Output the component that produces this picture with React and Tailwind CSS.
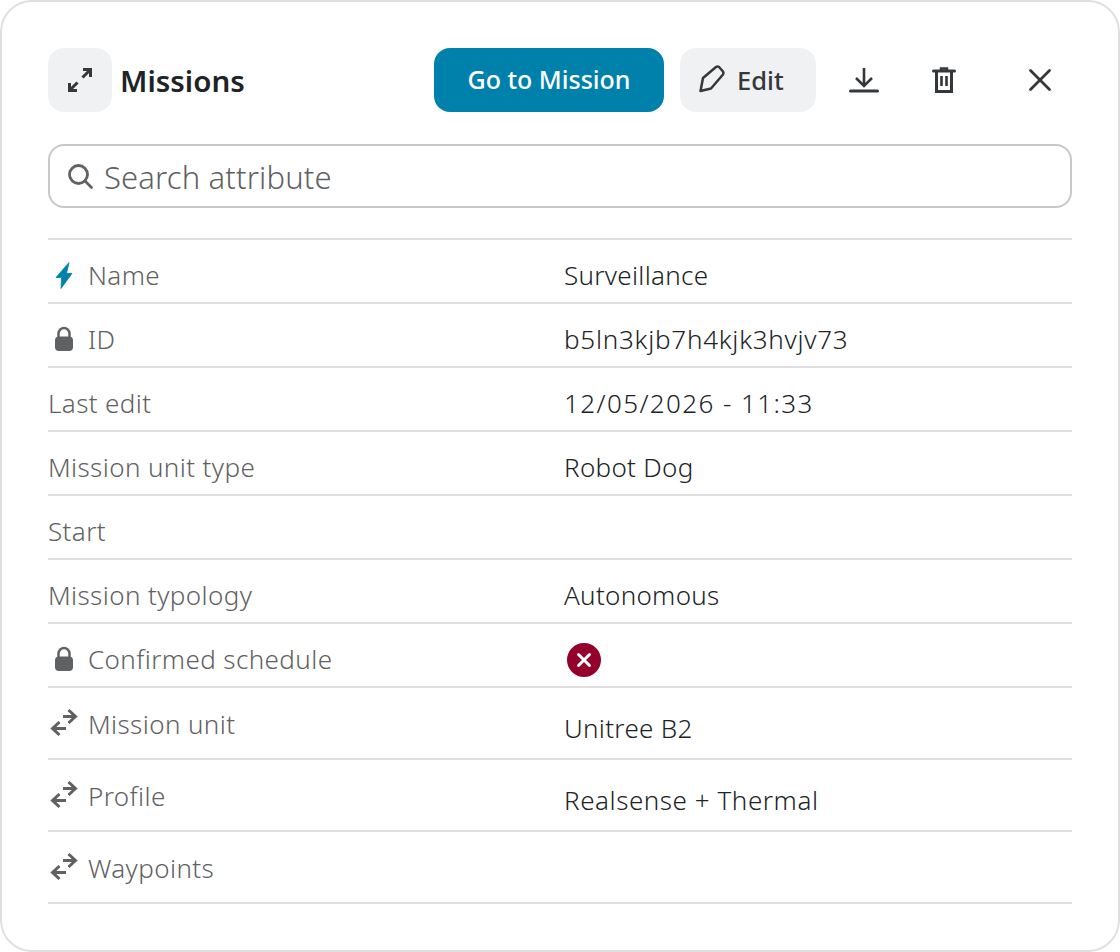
import React from "react";

const Lock = () => (
  <svg width="32" height="32" viewBox="0 0 32 32" className="shrink-0">
    <path d="M10.5 14 V9.5 a5.5 5.5 0 0 1 11 0 V14" fill="none" stroke="#5f6163" strokeWidth="2.5" />
    <rect x="7" y="12.5" width="18" height="14.5" rx="4" fill="#5f6163" />
  </svg>
);
const Bolt = () => (
  <svg width="32" height="32" viewBox="0 0 32 32" className="shrink-0">
    <path d="M21 2.5 L8 17.5 H13.5 L13 28.5 L24 13.5 H18.5 Z" fill="#0081ab" strokeLinejoin="round" stroke="#0081ab" strokeWidth="0.8" />
  </svg>
);
const Swap = () => (
  <svg width="32" height="32" viewBox="0 0 32 32" fill="none" stroke="#5f6163" strokeWidth="3" className="shrink-0 mb-[2px]">
    <path d="M15 9.5 H27 M20.5 3 L27.5 9.5 L20.5 16" />
    <path d="M18 21.5 H5 M11.5 15 L4.5 21.5 L11.5 28" />
  </svg>
);

const rows = [
  { l: "Name", v: "Surveillance", icon: "bolt" },
  { l: "ID", v: "b5ln3kjb7h4kjk3hvjv73", icon: "lock", t: "tracking-[0.75px]" },
  { l: "Last edit", v: "12/05/2026 - 11:33", t: "tracking-[1.4px]" },
  { l: "Mission unit type", v: "Robot Dog" },
  { l: "Start", v: "" },
  { l: "Mission typology", v: "Autonomous" },
  { l: "Confirmed schedule", x: true, icon: "lock" },
  { l: "Mission unit", v: "Unitree B2", icon: "swap", tall: true },
  { l: "Profile", v: "Realsense + Thermal", icon: "swap", tall: true, t: "tracking-[0.55px]" },
  { l: "Waypoints", v: "", icon: "swap", tall: true },
];

function Row({ r }) {
  return (
    <div className={`flex border-b-2 border-[#e0e0e0] ${r.tall ? "h-[72px]" : "h-16"}`}>
      <div className={`w-[516px] shrink-0 flex items-center text-[#5f6163] font-light tracking-[0.4px] ${r.tall ? "pt-2 pb-[6px]" : "pt-[9px]"}`}>
        {r.icon === "bolt" && <span className="w-10 flex"><Bolt /></span>}
        {r.icon === "lock" && <span className="w-10 flex"><Lock /></span>}
        {r.icon === "swap" && <span className="w-10 flex"><Swap /></span>}
        <span>{r.l}</span>
      </div>
      <div className={`flex-1 flex items-center text-[#202326] font-light ${r.t || "tracking-[0.3px]"} ${r.tall ? "pt-[10px]" : "pt-[9px]"}`}>
        {r.x ? (
          <svg width="34" height="34" viewBox="0 0 34 34" className="ml-[3px]">
            <circle cx="17" cy="17" r="17" fill="#94002b" />
            <path d="M11.5 11.5 L22.5 22.5 M22.5 11.5 L11.5 22.5" stroke="#fff" strokeWidth="3" strokeLinecap="round" />
          </svg>
        ) : (
          <span>{r.v}</span>
        )}
      </div>
    </div>
  );
}

export default function App() {
  return (
    <div className="w-[1120px] h-[952px] bg-white">
      <div className="w-full h-full box-border rounded-[32px] border-2 border-[#e0e0e0] bg-white px-[46px] pt-[46px] text-[26px] font-['Noto_Sans',sans-serif]">
        <div className="flex items-center h-16">
          <div className="w-16 h-16 rounded-2xl bg-[#f0f1f3] flex items-center justify-center">
            <svg width="32" height="32" viewBox="0 0 32 32" fill="none" stroke="#35383b" strokeWidth="3">
              <path d="M18.5 13.5 L26 6 M19 5.5 H26.5 V13" />
              <path d="M13.5 18.5 L6 26 M13 26.5 H5.5 V19" />
            </svg>
          </div>
          <div className="ml-2 pt-[2px] text-[29.5px] font-semibold text-[#202326]">Missions</div>
          <div className="flex-1" />
          <button className="w-[230px] h-16 rounded-2xl bg-[#0081ab] text-white font-medium text-[25px]">Go to Mission</button>
          <button className="ml-4 w-[136px] h-16 rounded-2xl bg-[#f0f1f3] text-[#35383b] font-medium text-[25.5px] flex items-center pl-4 gap-[9px]">
            <svg width="32" height="32" viewBox="0 0 32 32" fill="none" stroke="#35383b" strokeWidth="2.5" strokeLinejoin="round" className="shrink-0">
              <path d="M4.5 27 L7 14 L20 3 Q21.5 2 23 3 L27 7.5 Q28 9 27 10.5 L15 24.5 Z" />
            </svg>
            Edit
          </button>
          <div className="w-12 h-12 ml-6 flex items-center justify-center">
            <svg width="30" height="30" viewBox="0 0 30 30" fill="none" stroke="#35383b">
              <path d="M15 3 V20 M7 13 L15 21 L23 13" strokeWidth="2.6" />
              <path d="M1.5 26 H28.5" strokeWidth="3" strokeLinecap="round" />
            </svg>
          </div>
          <div className="w-12 h-12 ml-8 flex items-center justify-center">
            <svg width="26" height="28" viewBox="0 0 26 28" fill="none" stroke="#35383b" className="mt-[1px]">
              <path d="M2.5 4 H23.5" strokeWidth="3" strokeLinecap="round" />
              <path d="M10 3 V1.5 H16 V3" strokeWidth="2.4" />
              <path d="M5.5 4 V24.5 H20.5 V4" strokeWidth="3" />
              <path d="M10.5 9 V19 M15.5 9 V19" strokeWidth="2.6" />
            </svg>
          </div>
          <div className="w-12 h-12 ml-12 flex items-center justify-center">
            <svg width="26" height="26" viewBox="0 0 26 26" fill="none" stroke="#35383b" strokeWidth="2.8" strokeLinecap="round">
              <path d="M3.5 3.5 L22.5 22.5 M22.5 3.5 L3.5 22.5" />
            </svg>
          </div>
          <div className="w-2" />
        </div>
        <div className="mt-8 h-16 rounded-2xl border-2 border-[#c8c8c8] flex items-center pl-[16px] text-[#5f6163] font-light">
          <svg width="28" height="28" viewBox="0 0 28 28" fill="none" stroke="#5f6163" strokeWidth="2.8" className="shrink-0">
            <circle cx="12.5" cy="12.5" r="9" />
            <path d="M19 19 L25.5 25.5" strokeLinecap="round" />
          </svg>
          <span className="ml-[10px] pt-[2px] text-[31px] tracking-[0.15px]">Search attribute</span>
        </div>
        <div className="mt-[30px] border-t-2 border-[#e0e0e0]">
          {rows.map((r) => <Row key={r.l} r={r} />)}
        </div>
      </div>
    </div>
  );
}
